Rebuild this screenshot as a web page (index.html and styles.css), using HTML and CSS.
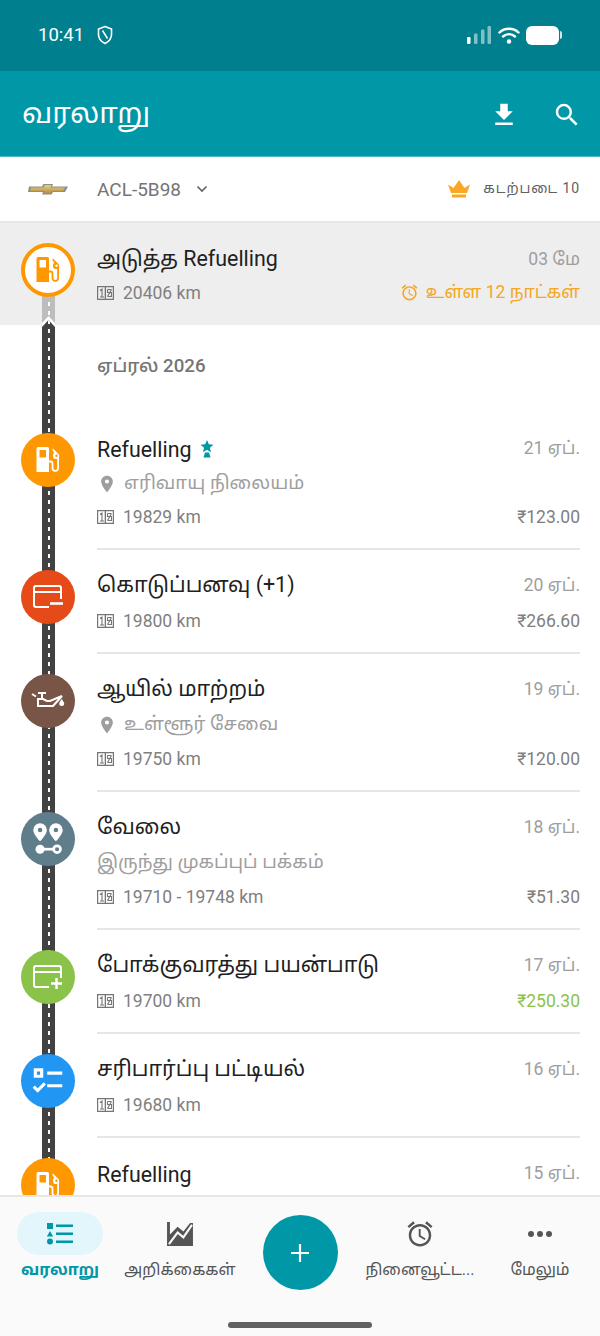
FILE: index.html
```html
<!DOCTYPE html>
<html lang="ta">

<head>
  <meta charset="UTF-8">
  <meta name="viewport" content="width=device-width, initial-scale=1.0">
  <link rel="stylesheet" href="styles.css">
  <title>வரலாறு</title>
</head>

<body>
  <svg class="sprite" xmlns="http://www.w3.org/2000/svg">
    <symbol id="i-fuel" viewBox="0 0 26 26">
      <path fill-rule="evenodd" d="M2 0h9.500A1.500 1.500 0 0 1 13 1.500V25H.5V1.500A1.500 1.500 0 0 1 2 0zM3.500 3v7.500h6.500V3z" fill="currentColor"/>
      <path d="M13 14.500h1.500a2 2 0 0 1 2 2V21a2.800 2.800 0 0 0 5.600 0V10" fill="none" stroke="currentColor" stroke-width="1.800"/>
      <path fill-rule="evenodd" d="M17 1.500l5.500 5.500a2 2 0 0 1 .6 1.400V12h-3.500a2.500 2.500 0 0 1-2.500-2.500V7l1.200-1-2-3zM20.500 7.500a1.200 1.200 0 1 0 0 2.400 1.200 1.200 0 0 0 0-2.400z" fill="currentColor"/>
    </symbol>
    <symbol id="i-odo" viewBox="0 0 17 14">
      <path fill-rule="evenodd" d="M0 0h17v14H0zM1.200 1.200v11.600h6.500V1.200zM9 1.200v11.600h6.800V1.200z" fill="currentColor"/>
      <path d="M3 4.500L5 3v8M3 11h4M10.500 3.500h4M10.500 3.500v3h4v4h-4M14.500 3.500l-4 7" fill="none" stroke="currentColor" stroke-width="1.100"/>
    </symbol>
    <symbol id="i-pin" viewBox="0 0 24 24">
      <path d="M12 2C8.130 2 5 5.130 5 9c0 5.250 7 13 7 13s7-7.750 7-13c0-3.870-3.130-7-7-7zm0 9.500a2.500 2.500 0 0 1 0-5 2.500 2.500 0 0 1 0 5z" fill="currentColor"/>
    </symbol>
    <symbol id="i-alarm" viewBox="0 0 24 24">
      <path d="M22 5.720l-4.600-3.860-1.290 1.530 4.600 3.860L22 5.720zM7.880 3.390L6.600 1.860 2 5.710l1.290 1.530 4.590-3.850zM12.500 8H11v6l4.750 2.850.75-1.230-4-2.370V8zM12 4c-4.970 0-9 4.030-9 9s4.020 9 9 9c4.970 0 9-4.030 9-9s-4.030-9-9-9zm0 16c-3.870 0-7-3.130-7-7s3.130-7 7-7 7 3.130 7 7-3.130 7-7 7z" fill="currentColor"/>
    </symbol>
  </svg>

  <div class="status-bar">
    <div class="status-left">
      <span class="time">10:41</span>
      <svg class="shield" viewBox="0 0 16 20"><path d="M8 1.500L14.500 4v5.500c0 4-2.800 7.200-6.500 9-3.700-1.800-6.500-5-6.500-9V4z" fill="none" stroke="#fff" stroke-width="1.600"/><path d="M5.500 5.500l5 8" stroke="#fff" stroke-width="1.500"/></svg>
    </div>
    <div class="status-right">
      <svg class="signal" viewBox="0 0 24 18">
        <rect x="0" y="11" width="3.500" height="7" rx="1.200" fill="#fff"/>
        <rect x="7" y="7.500" width="3.500" height="10.500" rx="1.200" fill="#fff" fill-opacity=".5"/>
        <rect x="14" y="3.500" width="3.500" height="14.500" rx="1.200" fill="#fff" fill-opacity=".5"/>
        <rect x="20.500" y="0" width="3.500" height="18" rx="1.200" fill="#fff" fill-opacity=".5"/>
      </svg>
      <svg class="wifi" viewBox="0 0 22 18">
        <path d="M1.500 6.500C6.500 1.500 15.500 1.500 20.500 6.500M5 10.500c3.500-3.200 8.500-3.200 12 0" fill="none" stroke="#fff" stroke-width="2.400" stroke-linecap="round"/>
        <circle cx="11" cy="15.500" r="2.200" fill="#fff"/>
      </svg>
      <div class="battery"><div class="battery-body"></div><div class="battery-tip"></div></div>
    </div>
  </div>

  <header class="app-bar">
    <h1>வரலாறு</h1>
    <div class="app-actions">
      <svg class="app-icon" viewBox="0 0 24 24"><path d="M19 9h-4V3H9v6H5l7 7 7-7zM5 18v2h14v-2H5z" fill="#fff"/></svg>
      <svg class="app-icon" viewBox="0 0 24 24"><path d="M15.500 14h-.790l-.280-.270A6.470 6.470 0 0 0 16 9.500 6.500 6.500 0 1 0 9.500 16c1.610 0 3.090-.590 4.230-1.570l.270.280v.790l5 4.990L20.490 19l-4.990-5zm-6 0C7.010 14 5 11.990 5 9.500S7.010 5 9.500 5 14 7.010 14 9.500 11.990 14 9.500 14z" fill="#fff"/></svg>
    </div>
  </header>

  <div class="vehicle-bar">
    <div class="vehicle">
      <svg class="logo" viewBox="0 0 40 12">
        <defs><linearGradient id="gold" x1="0" y1="0" x2="0" y2="1"><stop offset="0" stop-color="#e8cf8a"/><stop offset="1" stop-color="#b08d3c"/></linearGradient></defs>
        <path d="M1 3.500h13l1.500-2.500h9.500l-1 2.500h16l-3 5.500H25l-1.500 2.500H14l1-2.500H0z" fill="#8d8d8d"/>
        <path d="M3 4.500h12.500l1.500-2.500h6.500l-1 2.500h14.500l-2 3.500H24l-1.500 2.500H16l1-2.500H2z" fill="url(#gold)"/>
      </svg>
      <span class="plate">ACL-5B98</span>
      <svg class="caret" viewBox="0 0 12 8"><path d="M1.500 1.500L6 6l4.500-4.500" fill="none" stroke="#616161" stroke-width="1.600"/></svg>
    </div>
    <div class="fleet">
      <svg class="crown" viewBox="0 0 22 18"><path d="M0 4.500l5.500 3.500L11 0l5.500 8L22 4.500 19 13H3z" fill="#f9a825"/><rect x="4" y="14.500" width="14" height="3" fill="#f9a825"/></svg>
      <span>கடற்படை 10</span>
    </div>
  </div>

  <div class="history">
    <div class="road-tip"></div>
    <div class="road"></div>

    <section class="next">
      <div class="road-next"></div>
      <div class="bubble bubble-next"><svg class="ic-fuel"><use href="#i-fuel"/></svg></div>
      <div class="row-line">
        <span class="title">அடுத்த Refuelling</span>
        <span class="date">03 மே</span>
      </div>
      <div class="meta-line">
        <span class="meta"><svg class="odo"><use href="#i-odo"/></svg>20406 km</span>
        <span class="due"><svg class="due-icon"><use href="#i-alarm"/></svg>உள்ள 12 நாட்கள்</span>
      </div>
    </section>

    <div class="month">ஏப்ரல் 2026</div>

    <article class="item item-first">
      <div class="bubble orange"><svg class="ic-fuel"><use href="#i-fuel"/></svg></div>
      <div class="row-line">
        <span class="title">Refuelling <svg class="star" viewBox="0 0 14 18"><path d="M7 0l1.800 4.300 4.700.4-3.600 3 1.100 4.500L7 9.800l-4 2.400 1.100-4.500-3.600-3 4.700-.4z" fill="#0097a7"/><path d="M5 12.500h4l1.500 5h-7z" fill="#0097a7"/></svg></span>
        <span class="date">21 ஏப்.</span>
      </div>
      <div class="meta-line"><span class="meta meta-place"><svg class="pin"><use href="#i-pin"/></svg>எரிவாயு நிலையம்</span></div>
      <div class="meta-line">
        <span class="meta"><svg class="odo"><use href="#i-odo"/></svg>19829 km</span>
        <span class="price">₹123.00</span>
      </div>
    </article>

    <article class="item">
      <div class="bubble red">
        <svg class="ic-card" viewBox="0 0 30 24"><path d="M16 22H3a2 2 0 0 1-2-2V3a2 2 0 0 1 2-2h23a2 2 0 0 1 2 2v11M1 7h27" fill="none" stroke="currentColor" stroke-width="2"/><path d="M17 18.500h13" stroke="currentColor" stroke-width="2.600"/></svg>
      </div>
      <div class="row-line">
        <span class="title">கொடுப்பனவு (+1)</span>
        <span class="date">20 ஏப்.</span>
      </div>
      <div class="meta-line">
        <span class="meta"><svg class="odo"><use href="#i-odo"/></svg>19800 km</span>
        <span class="price">₹266.60</span>
      </div>
    </article>

    <article class="item">
      <div class="bubble brown">
        <svg class="ic-oil" viewBox="0 0 36 18">
          <path d="M2 2l4 2.500M8 1h8M12 1v5M8 7h5l4 2h3l12-5-9 10H8z" fill="none" stroke="currentColor" stroke-width="2"/>
          <path d="M31.700 7c-1.500 2.300-2.500 3.400-2.500 4.600a2.500 2.500 0 0 0 5 0c0-1.200-1-2.300-2.500-4.600z" fill="currentColor"/>
        </svg>
      </div>
      <div class="row-line">
        <span class="title">ஆயில் மாற்றம்</span>
        <span class="date">19 ஏப்.</span>
      </div>
      <div class="meta-line"><span class="meta meta-place"><svg class="pin"><use href="#i-pin"/></svg>உள்ளூர் சேவை</span></div>
      <div class="meta-line">
        <span class="meta"><svg class="odo"><use href="#i-odo"/></svg>19750 km</span>
        <span class="price">₹120.00</span>
      </div>
    </article>

    <article class="item">
      <div class="bubble slate">
        <svg class="ic-route" viewBox="0 0 30 30">
          <path fill-rule="evenodd" d="M8 1a6 6 0 0 1 6 6c0 4-6 10-6 10S2 11 2 7a6 6 0 0 1 6-6zm0 4a2 2 0 1 0 0 4 2 2 0 0 0 0-4z" fill="currentColor"/>
          <path fill-rule="evenodd" d="M22 1a6 6 0 0 1 6 6c0 4-6 10-6 10s-6-6-6-10a6 6 0 0 1 6-6zm0 4a2 2 0 1 0 0 4 2 2 0 0 0 0-4z" fill="currentColor"/>
          <circle cx="8" cy="24" r="4" fill="currentColor"/>
          <path d="M8 24h12" stroke="currentColor" stroke-width="2.400"/>
          <circle cx="23" cy="24" r="3" fill="none" stroke="currentColor" stroke-width="2.400"/>
        </svg>
      </div>
      <div class="row-line">
        <span class="title">வேலை</span>
        <span class="date">18 ஏப்.</span>
      </div>
      <div class="meta-line"><span class="meta meta-place">இருந்து முகப்புப் பக்கம்</span></div>
      <div class="meta-line">
        <span class="meta"><svg class="odo"><use href="#i-odo"/></svg>19710 - 19748 km</span>
        <span class="price">₹51.30</span>
      </div>
    </article>

    <article class="item">
      <div class="bubble green">
        <svg class="ic-card" viewBox="0 0 30 24"><path d="M16 22H3a2 2 0 0 1-2-2V3a2 2 0 0 1 2-2h23a2 2 0 0 1 2 2v10M1 7h27" fill="none" stroke="currentColor" stroke-width="2"/><path d="M18 18.500h11M23.500 13v11" stroke="currentColor" stroke-width="2.400"/></svg>
      </div>
      <div class="row-line">
        <span class="title">போக்குவரத்து பயன்பாடு</span>
        <span class="date">17 ஏப்.</span>
      </div>
      <div class="meta-line">
        <span class="meta"><svg class="odo"><use href="#i-odo"/></svg>19700 km</span>
        <span class="price price-in">₹250.30</span>
      </div>
    </article>

    <article class="item">
      <div class="bubble blue">
        <svg class="ic-list" viewBox="0 0 24 24"><path fill-rule="evenodd" d="M3 4h6v6H3zm2 2v2h2V6z" fill="currentColor"/><path d="M11.500 7H21M11.500 15H21M3 15.500l2.500 2.500L10 13.500" fill="none" stroke="currentColor" stroke-width="2"/></svg>
      </div>
      <div class="row-line">
        <span class="title">சரிபார்ப்பு பட்டியல்</span>
        <span class="date">16 ஏப்.</span>
      </div>
      <div class="meta-line">
        <span class="meta"><svg class="odo"><use href="#i-odo"/></svg>19680 km</span>
      </div>
    </article>

    <article class="item">
      <div class="bubble orange"><svg class="ic-fuel"><use href="#i-fuel"/></svg></div>
      <div class="row-line">
        <span class="title">Refuelling</span>
        <span class="date">15 ஏப்.</span>
      </div>
    </article>
  </div>

  <nav class="bottom-nav">
    <div class="nav-items">
      <div class="nav-item active">
        <div class="nav-pill">
          <svg viewBox="0 0 26 22" class="nav-icon"><path d="M0 0h6v6H0zM3 8l3.200 5.500H-.2zM3 15.500a3 3 0 1 1 0 6 3 3 0 0 1 0-6zM9 1.500h17v2.500H9zM9 9.500h17v2.500H9zM9 17.500h17v2.500H9z" fill="#0097a7"/></svg>
        </div>
        <span class="nav-label">வரலாறு</span>
      </div>
      <div class="nav-item">
        <div class="nav-pill">
          <svg viewBox="0 0 27 25" class="nav-icon"><path d="M0 0h3v13L11 5l6 5 7-9h3v24H0z" fill="#555"/><path d="M2 23L11 11l6 5L26 3" fill="none" stroke="#fafafa" stroke-width="2.200"/></svg>
        </div>
        <span class="nav-label">அறிக்கைகள்</span>
      </div>
      <div class="nav-item">
        <div class="fab">
          <svg viewBox="0 0 20 20"><path d="M10 1v18M1 10h18" stroke="#fff" stroke-width="2.200"/></svg>
        </div>
      </div>
      <div class="nav-item">
        <div class="nav-pill">
          <svg viewBox="0 0 24 24" class="nav-icon nav-icon-alarm"><use href="#i-alarm"/></svg>
        </div>
        <span class="nav-label">நினைவூட்ட...</span>
      </div>
      <div class="nav-item">
        <div class="nav-pill">
          <div class="dots"><i></i><i></i><i></i></div>
        </div>
        <span class="nav-label">மேலும்</span>
      </div>
    </div>
    <div class="home-bar"></div>
  </nav>
</body>

</html>
```

FILE: styles.css
```css
* {
  margin: 0;
  padding: 0;
  box-sizing: border-box;
}

html,
body {
  width: 600px;
  height: 1336px;
  overflow: hidden;
}

body {
  display: flex;
  flex-direction: column;
  font-family: Roboto, "Noto Sans Tamil", "Noto Sans", sans-serif;
  color: #212121;
  background: #fff;
}

.sprite {
  position: absolute;
  width: 0;
  height: 0;
}

/* status bar */
.status-bar {
  height: 71px;
  flex: none;
  display: flex;
  align-items: center;
  justify-content: space-between;
  padding: 0 38px 1px;
  background: #00808f;
  color: #fff;
}

.status-left,
.status-right {
  display: flex;
  align-items: center;
}

.time {
  font-size: 18.500px;
}

.shield {
  width: 16px;
  height: 20px;
  margin-left: 13px;
}

.signal {
  width: 24px;
  height: 18px;
}

.wifi {
  width: 22px;
  height: 18px;
  margin-left: 7px;
}

.battery {
  display: flex;
  align-items: center;
  margin-left: 6px;
}

.battery-body {
  width: 33px;
  height: 19px;
  background: #fff;
  border-radius: 6px;
}

.battery-tip {
  width: 2px;
  height: 8px;
  margin-left: 1px;
  background: #cfe8eb;
  border-radius: 0 2px 2px 0;
}

/* app bar */
.app-bar {
  height: 86px;
  flex: none;
  display: flex;
  align-items: center;
  justify-content: space-between;
  padding: 0 18px 0 22px;
  background: #0097a7;
  border-bottom: 1px solid #4db6c2;
}

.app-bar h1 {
  padding-top: 3px;
  font-size: 29px;
  font-weight: 400;
  color: #fff;
}

.app-actions {
  display: flex;
  gap: 33px;
  padding-top: 2px;
}

.app-icon {
  width: 30px;
  height: 30px;
}

/* vehicle selector */
.vehicle-bar {
  height: 66px;
  flex: none;
  display: flex;
  align-items: center;
  justify-content: space-between;
  padding: 0 20px 0 28px;
  background: #fff;
  border-bottom: 2px solid #e6e6e6;
}

.vehicle,
.fleet {
  display: flex;
  align-items: center;
}

.logo {
  width: 40px;
  height: 12px;
}

.plate {
  margin-left: 29px;
  font-size: 19px;
  color: #757575;
}

.caret {
  width: 12px;
  height: 8px;
  margin-left: 15px;
}

.crown {
  width: 22px;
  height: 18px;
  margin-right: 13px;
}

.fleet span {
  font-size: 14px;
  letter-spacing: .9px;
  color: #616161;
}

/* history list */
.history {
  flex: 1;
  position: relative;
  overflow: hidden;
}

.road,
.road-tip {
  position: absolute;
  left: 42px;
  width: 13px;
  clip-path: polygon(0 7px, 50% 0, 100% 7px, 100% 100%, 0 100%);
  z-index: 1;
}

.road-tip {
  top: 93px;
  height: 12px;
  background: #fff;
}

.road {
  top: 97px;
  bottom: 0;
  background-color: #424242;
  background-image: repeating-linear-gradient(#fff 0 4px, transparent 4px 9px);
  background-size: 2px 100%;
  background-position: center;
  background-repeat: no-repeat;
}

.next {
  position: relative;
  height: 102px;
  padding: 22px 20px 0 97px;
  background: #eee;
}

.next .row-line {
  margin-bottom: 1px;
}

.road-next {
  position: absolute;
  top: 70px;
  bottom: 0;
  left: 42px;
  width: 13px;
  background-color: #bdbdbd;
  background-image: repeating-linear-gradient(#fff 0 4px, transparent 4px 9px);
  background-size: 2px 100%;
  background-position: center;
  background-repeat: no-repeat;
}

.bubble {
  position: absolute;
  z-index: 2;
  left: 21px;
  top: 20px;
  width: 54px;
  height: 54px;
  display: flex;
  align-items: center;
  justify-content: center;
  border-radius: 50%;
  color: #fff;
}

.ic-fuel {
  width: 26px;
  height: 26px;
  margin-left: 2px;
}

.ic-card {
  width: 30px;
  height: 24px;
}

.ic-oil {
  width: 36px;
  height: 18px;
}

.ic-route {
  width: 34px;
  height: 34px;
}

.ic-list {
  width: 38px;
  height: 38px;
}

.bubble-next {
  background: #fff;
  border: 4px solid #ff9800;
  color: #ff9800;
}

.orange {
  background: #ff9800;
}

.red {
  background: #e64a19;
}

.brown {
  background: #795548;
}

.slate {
  background: #607d8b;
}

.green {
  background: #8bc34a;
}

.blue {
  background: #2196f3;
}

.month {
  position: relative;
  height: 88px;
  padding: 26px 0 0 97px;
  font-size: 18.700px;
  font-weight: 500;
  line-height: 30px;
  color: #757575;
}

.item {
  position: relative;
  padding: 21px 20px 17px 97px;
}

.item::after {
  content: "";
  position: absolute;
  left: 97px;
  right: 20px;
  bottom: 0;
  height: 2px;
  background: #e6e6e6;
}

.row-line {
  display: flex;
  align-items: center;
  justify-content: space-between;
  height: 30px;
  margin-bottom: 3px;
}

.meta-line {
  display: flex;
  align-items: center;
  justify-content: space-between;
  height: 33px;
}

.meta-line + .meta-line {
  margin-top: 1px;
}

.item-first .meta-line + .meta-line {
  margin-top: 0;
}

.title {
  display: flex;
  align-items: center;
  gap: 8px;
  font-size: 21.400px;
  color: #212121;
}

.star {
  width: 14px;
  height: 18px;
}

.date {
  font-size: 17.500px;
  color: #9e9e9e;
}

.meta {
  display: flex;
  align-items: center;
  font-size: 17.500px;
  color: #808080;
}

.meta-place {
  font-size: 18.700px;
  color: #9e9e9e;
}

.odo {
  width: 17px;
  height: 14px;
  margin-right: 9px;
  color: #757575;
}

.pin {
  width: 20px;
  height: 20px;
  margin-right: 7px;
  color: #9e9e9e;
}

.price {
  font-size: 17.500px;
  color: #808080;
}

.price-in {
  color: #8bc34a;
}

.due {
  display: flex;
  align-items: center;
  font-size: 17.500px;
  color: #f5a623;
}

.due-icon {
  width: 19px;
  height: 19px;
  margin-right: 7px;
}

/* bottom navigation */
.bottom-nav {
  position: relative;
  z-index: 3;
  height: 141px;
  flex: none;
  background: #fafafa;
  border-top: 2px solid #e6e6e6;
}

.nav-items {
  display: grid;
  grid-template-columns: repeat(5, 120px);
  padding-top: 15px;
}

.nav-item {
  display: flex;
  flex-direction: column;
  align-items: center;
}

.nav-pill {
  width: 86px;
  height: 43px;
  display: flex;
  align-items: center;
  justify-content: center;
  border-radius: 22px;
}

.active .nav-pill {
  background: #e3f6fb;
}

.nav-icon {
  width: 26px;
  height: 24px;
}

.nav-icon-alarm {
  width: 30px;
  height: 30px;
  color: #555;
}

.nav-label {
  margin-top: 3px;
  font-size: 16px;
  line-height: 24px;
  color: #555;
}

.active .nav-label {
  font-weight: 700;
  color: #0097a7;
}

.fab {
  width: 75px;
  height: 75px;
  display: flex;
  align-items: center;
  justify-content: center;
  margin-top: 3px;
  border-radius: 50%;
  background: #0097a7;
}

.fab svg {
  width: 20px;
  height: 20px;
}

.dots {
  display: flex;
  gap: 3px;
}

.dots i {
  width: 6px;
  height: 6px;
  border-radius: 50%;
  background: #555;
}

.home-bar {
  width: 144px;
  height: 6px;
  margin: 32px auto 0;
  border-radius: 3px;
  background: #616161;
}
```
